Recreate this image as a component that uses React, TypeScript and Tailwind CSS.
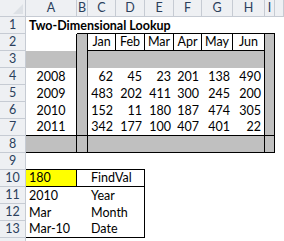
import type { ReactNode } from 'react';

const font = { fontFamily: 'Lato, "Liberation Sans", sans-serif' };

interface CellProps {
  children?: ReactNode;
  className?: string;
}

function Cell({ children, className = '' }: CellProps) {
  return (
    <div className={`flex items-end overflow-visible whitespace-nowrap leading-[15px] pb-[1px] text-[12.5px] text-black ${className}`}>
      {children}
    </div>
  );
}

function ColHead({ label }: { label: string }) {
  return (
    <div className="flex items-center justify-center bg-[#eef0f3] border-r border-b border-[#c6cbd3] text-[12.5px] text-[#2b3f5c]">
      {label}
    </div>
  );
}

function RowHead({ n }: { n?: number }) {
  return (
    <div className="flex items-center justify-center bg-[#eef0f3] border-r border-b border-[#c6cbd3] text-[12.5px] text-[#2b3f5c]">
      {n}
    </div>
  );
}

const months = ['Jan', 'Feb', 'Mar', 'Apr', 'May', 'Jun'];
const data = [
  { year: 2008, vals: [62, 45, 23, 201, 138, 490] },
  { year: 2009, vals: [483, 202, 411, 300, 245, 200] },
  { year: 2010, vals: [152, 11, 180, 187, 474, 305] },
  { year: 2011, vals: [342, 177, 100, 407, 401, 22] },
];

export default function App() {
  return (
    <div className="w-[284px] h-[241px] overflow-hidden bg-white" style={font}>
      <div className="grid grid-cols-[26px_51px_11px_28px_29px_29px_28px_31px_32px_10px_1fr] auto-rows-[17px]">
        {/* Column headers */}
        <div className="relative bg-[#eef0f3] border-r border-b border-[#c6cbd3]">
          <svg className="absolute right-[2px] bottom-[2px]" width="10" height="10" viewBox="0 0 10 10">
            <polygon points="10,0 10,10 0,10" fill="#dde1e6" />
          </svg>
        </div>
        {['A', 'B', 'C', 'D', 'E', 'F', 'G', 'H', 'I', ''].map((c, i) => (
          <ColHead key={i} label={c} />
        ))}

        {/* Row 1 */}
        <RowHead n={1} />
        <Cell className="pl-[3px] font-bold z-10">Two-Dimensional Lookup</Cell>
        {Array.from({ length: 8 }).map((_, i) => (
          <Cell key={i} className="border-b border-black" />
        ))}
        <Cell />

        {/* Row 2 */}
        <RowHead n={2} />
        <Cell className="border-r border-black" />
        <Cell className="bg-[#c0c0c0] border-r border-black" />
        {months.map((m) => (
          <Cell key={m} className="justify-center border-r border-b border-black">{m}</Cell>
        ))}
        <Cell className="bg-[#c0c0c0] border-r border-black" />
        <Cell />

        {/* Row 3 */}
        <RowHead n={3} />
        <Cell className="bg-[#c0c0c0] border-r border-black" />
        <Cell className="bg-[#c0c0c0] border-r border-black" />
        {months.map((m, i) => (
          <Cell key={m} className={`bg-[#c0c0c0] ${i === 5 ? 'border-r border-black' : ''}`} />
        ))}
        <Cell className="bg-[#c0c0c0] border-r border-black" />
        <Cell />

        {/* Rows 4-7 */}
        {data.map((row, r) => {
          const last = r === data.length - 1 ? 'border-b border-black' : '';
          return [
            <RowHead key={`h${r}`} n={r + 4} />,
            <Cell key={`a${r}`} className={`justify-center border-r border-black ${last}`}>{row.year}</Cell>,
            <Cell key={`b${r}`} className={`bg-[#c0c0c0] border-r border-black ${last}`} />,
            ...row.vals.map((v, i) => (
              <Cell key={`v${r}${i}`} className={`justify-end pr-[3px] ${i === 5 ? 'border-r border-black' : ''} ${last}`}>{v}</Cell>
            )),
            <Cell key={`i${r}`} className={`bg-[#c0c0c0] border-r border-black ${last}`} />,
            <Cell key={`j${r}`} />,
          ];
        })}

        {/* Row 8 */}
        <RowHead n={8} />
        <Cell className="bg-[#c0c0c0] border-r border-b border-black" />
        <Cell className="bg-[#c0c0c0] border-r border-b border-black" />
        {months.map((m, i) => (
          <Cell key={m} className={`bg-[#c0c0c0] border-b border-black ${i === 5 ? 'border-r' : ''}`} />
        ))}
        <Cell className="bg-[#c0c0c0] border-r border-b border-black" />
        <Cell />

        {/* Row 9 */}
        <RowHead n={9} />
        {Array.from({ length: 4 }).map((_, i) => (
          <Cell key={i} className="border-b border-black" />
        ))}
        <Cell className="col-span-6" />

        {/* Row 10 */}
        <RowHead n={10} />
        <Cell className="pl-[3px] bg-[#ffff00] border-r border-b border-black">180</Cell>
        <Cell className="border-b border-black" />
        <Cell className="pl-[3px] border-b border-black z-10">FindVal</Cell>
        <Cell className="border-r border-b border-black" />
        <Cell className="col-span-6" />

        {/* Rows 11-13 */}
        {[
          ['2010', 'Year'],
          ['Mar', 'Month'],
          ['Mar-10', 'Date'],
        ].map(([a, c], r) => {
          const last = r === 2 ? 'border-b border-black' : '';
          return [
            <RowHead key={`h${r}`} n={r + 11} />,
            <Cell key={`a${r}`} className={`pl-[3px] ${last}`}>{a}</Cell>,
            <Cell key={`b${r}`} className={last} />,
            <Cell key={`c${r}`} className={`pl-[3px] z-10 ${last}`}>{c}</Cell>,
            <Cell key={`d${r}`} className={`border-r border-black ${last}`} />,
            <Cell key={`e${r}`} className="col-span-6" />,
          ];
        })}

        {/* Row 14, cut off at the bottom */}
        <RowHead />
      </div>
    </div>
  );
}
